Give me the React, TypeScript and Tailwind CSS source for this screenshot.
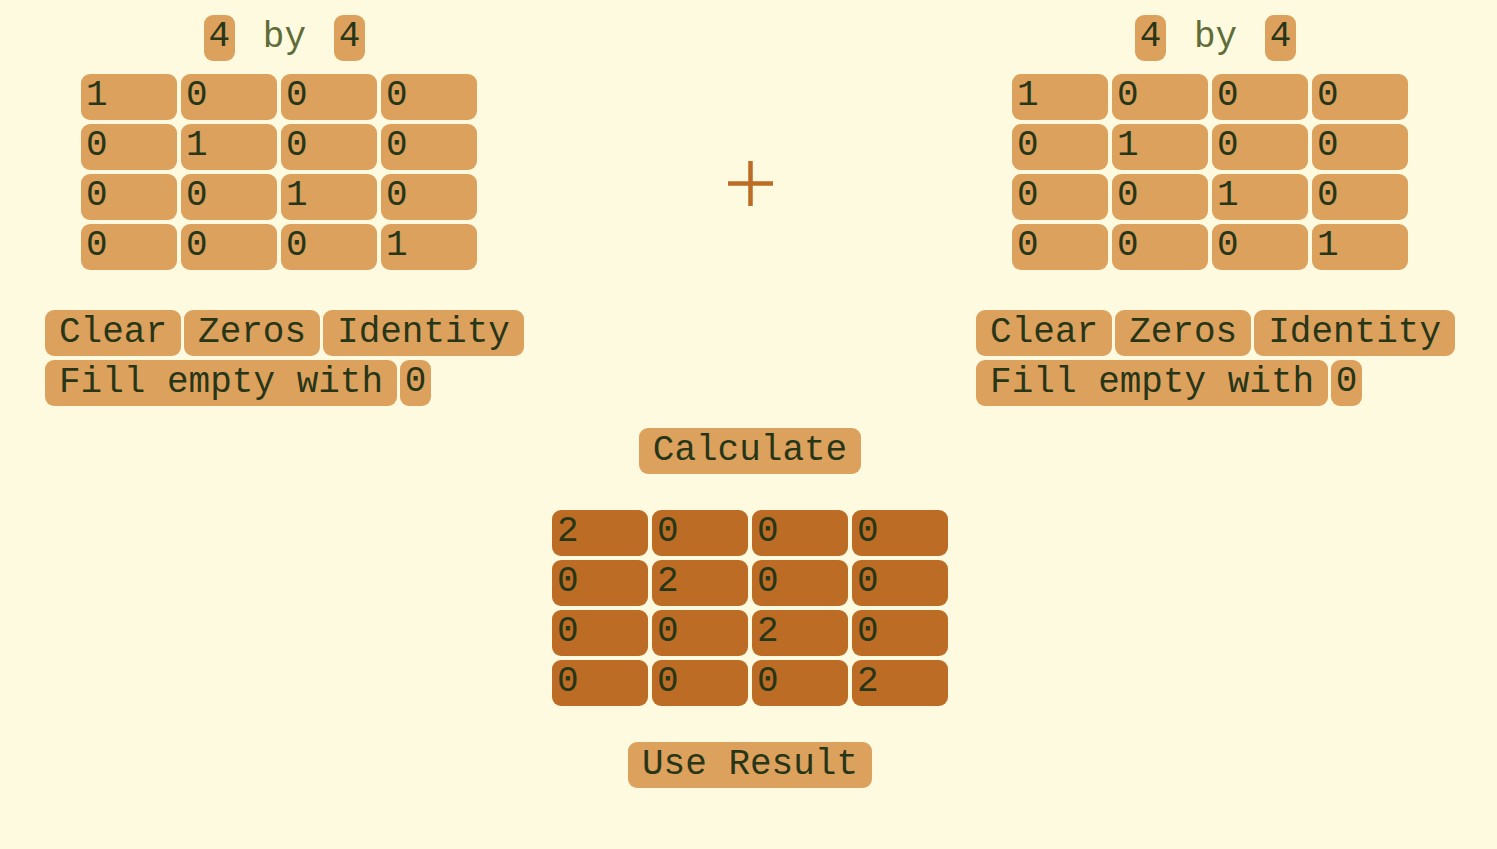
import { useState } from "react";

type Grid = string[][];

const build = (rows: number, cols: number, fill: (r: number, c: number) => string): Grid =>
  Array.from({ length: rows }, (_, r) => Array.from({ length: cols }, (_, c) => fill(r, c)));

const diagonal = (value: string) => (r: number, c: number) => (r === c ? value : "0");

const buttonStyle =
  "h-[46px] cursor-pointer rounded-[9px] bg-[#dda15e] px-[14px] whitespace-nowrap text-[#283618]";
const smallInputStyle =
  "h-[46px] w-[31px] rounded-[9px] bg-[#dda15e] pb-[3px] text-center text-[#283618] outline-none";

function Matrix({
  name,
  grid,
  onChange,
}: {
  name: string;
  grid: Grid;
  onChange?: (r: number, c: number, value: string) => void;
}) {
  return (
    <div className="flex flex-col gap-1">
      {grid.map((row, r) => (
        <div key={r} className="flex gap-1">
          {row.map((value, c) => (
            <input
              key={c}
              aria-label={`${name} row ${r + 1} column ${c + 1}`}
              value={value}
              readOnly={!onChange}
              onChange={(e) => onChange?.(r, c, e.target.value)}
              className={
                onChange
                  ? "h-[46px] w-24 rounded-[9px] bg-[#dda15e] px-[5px] pb-[3px] text-[#283618] outline-none"
                  : "h-[46px] w-24 rounded-[9px] bg-[#bc6c25] px-[5px] pb-[3px] text-[#283618] outline-none"
              }
            />
          ))}
        </div>
      ))}
    </div>
  );
}

function MatrixEditor({
  name,
  grid,
  setGrid,
}: {
  name: string;
  grid: Grid;
  setGrid: (grid: Grid) => void;
}) {
  const [filler, setFiller] = useState("0");
  const rows = grid.length;
  const cols = grid[0].length;

  const resize = (newRows: number, newCols: number) => {
    if (newRows > 0 && newCols > 0) {
      setGrid(build(newRows, newCols, (r, c) => grid[r]?.[c] ?? ""));
    }
  };

  return (
    <section aria-label={name} className="flex flex-col">
      <div className="flex items-center justify-center gap-7">
        <input
          aria-label={`${name} rows`}
          value={rows}
          maxLength={1}
          onChange={(e) => resize(Number(e.target.value), cols)}
          className={smallInputStyle}
        />
        <span className="text-[#606c38]">by</span>
        <input
          aria-label={`${name} columns`}
          value={cols}
          maxLength={1}
          onChange={(e) => resize(rows, Number(e.target.value))}
          className={smallInputStyle}
        />
      </div>
      <div className="mt-[13px] flex justify-center pr-[11px]">
        <Matrix
          name={name}
          grid={grid}
          onChange={(r, c, value) =>
            setGrid(build(rows, cols, (i, j) => (i === r && j === c ? value : grid[i][j])))
          }
        />
      </div>
      <div className="mt-10 flex gap-[3px]">
        <button className={buttonStyle} onClick={() => setGrid(build(rows, cols, () => ""))}>
          Clear
        </button>
        <button className={buttonStyle} onClick={() => setGrid(build(rows, cols, () => "0"))}>
          Zeros
        </button>
        <button className={buttonStyle} onClick={() => setGrid(build(rows, cols, diagonal("1")))}>
          Identity
        </button>
      </div>
      <div className="mt-1 flex gap-[3px]">
        <button
          className={buttonStyle}
          onClick={() => setGrid(build(rows, cols, (r, c) => grid[r][c] || filler))}
        >
          Fill empty with
        </button>
        <input
          aria-label={`${name} fill value`}
          value={filler}
          onChange={(e) => setFiller(e.target.value)}
          className={smallInputStyle}
        />
      </div>
    </section>
  );
}

export default function App() {
  const [left, setLeft] = useState<Grid>(() => build(4, 4, diagonal("1")));
  const [right, setRight] = useState<Grid>(() => build(4, 4, diagonal("1")));
  const [result, setResult] = useState<Grid>(() => build(4, 4, diagonal("2")));

  const calculate = () => {
    if (left.length === right.length && left[0].length === right[0].length) {
      setResult(
        build(left.length, left[0].length, (r, c) => String(Number(left[r][c]) + Number(right[r][c]))),
      );
    }
  };

  return (
    <main className="flex min-h-screen flex-col bg-[#fefae0] pt-[15px] pr-[42px] pb-10 pl-[45px] font-['Liberation_Mono',monospace] text-4xl text-[#283618]">
      <div className="flex items-start justify-between">
        <MatrixEditor name="First matrix" grid={left} setGrid={setLeft} />
        <button aria-label="Operation: add" className="mt-[146px] cursor-pointer">
          <svg width="45" height="45" viewBox="0 0 45 45" stroke="#bc6c25" strokeWidth="4.5" className="block">
            <path d="M22.5 0V45M0 22.5H45" />
          </svg>
        </button>
        <MatrixEditor name="Second matrix" grid={right} setGrid={setRight} />
      </div>
      <div className="mt-[22px] flex flex-col items-center gap-9">
        <button className={buttonStyle} onClick={calculate}>
          Calculate
        </button>
        <Matrix name="Result" grid={result} />
        <button className={buttonStyle} onClick={() => setLeft(result)}>
          Use Result
        </button>
      </div>
    </main>
  );
}
